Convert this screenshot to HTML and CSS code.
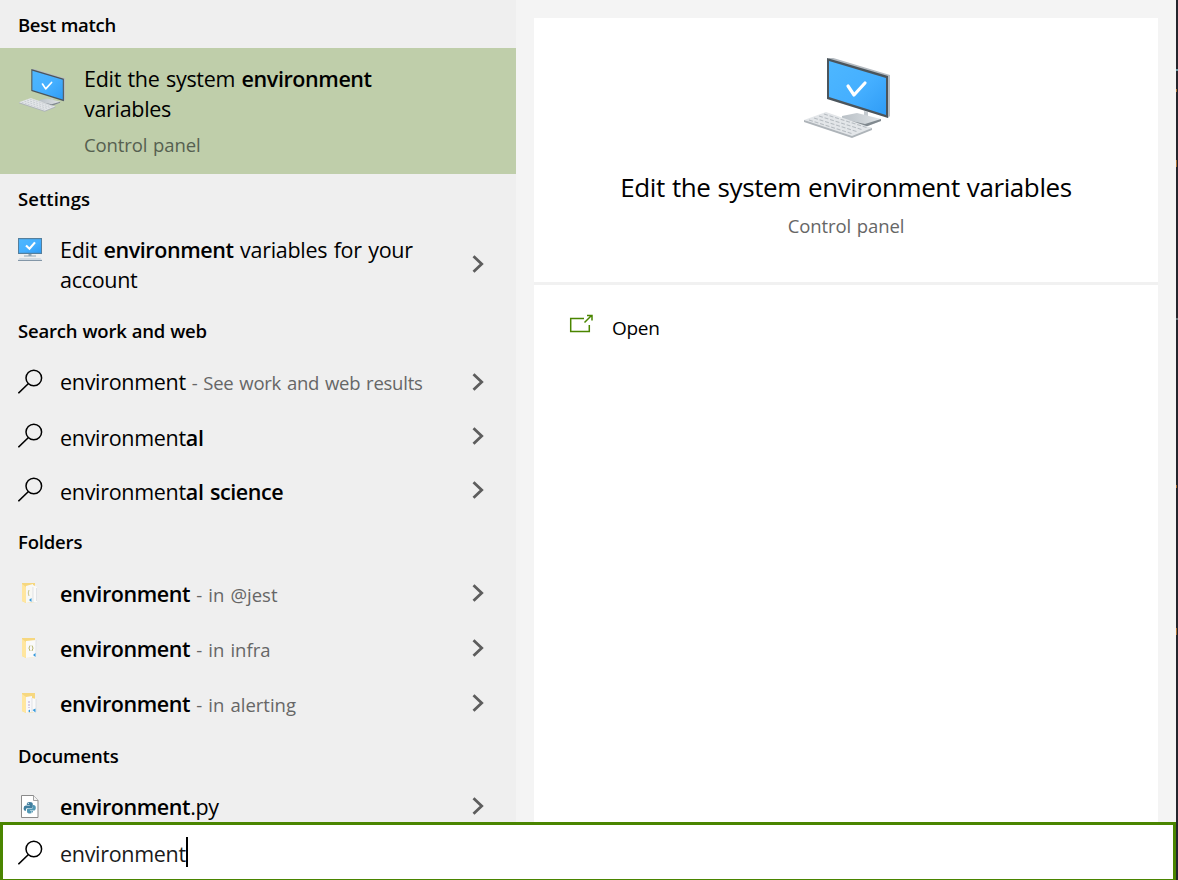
FILE: index.html
```html
<!DOCTYPE html>
<html lang="en">
<head>
<meta charset="utf-8">
<title>Search</title>
<link rel="stylesheet" href="styles.css">
</head>
<body>
<svg class="defs" aria-hidden="true">
  <defs>
    <linearGradient id="screen" x1="0" y1="0" x2="1" y2="1"><stop offset="0" stop-color="#4db7ff"/><stop offset=".55" stop-color="#45afff"/><stop offset="1" stop-color="#2f9cf6"/></linearGradient>
    <linearGradient id="stand" x1="0" y1="0" x2="1" y2="0"><stop offset="0" stop-color="#b9c0c6"/><stop offset="1" stop-color="#e0e4e7"/></linearGradient>
    <symbol id="computer" viewBox="0 0 88 82">
      <path d="M60 53l4 1v7h-4z" fill="#c5cbd0"/>
      <path d="M38 58l15-3 24 6v2l-16 6-23-8z" fill="url(#stand)"/>
      <path d="M38 61v2l23 6 16-6v-2l-16 5z" fill="#81898f"/>
      <path d="M24 0l2-1 60 18v41l-2 2z" fill="#b4bbc1"/>
      <path d="M23 0l61 18v42L23 41z" fill="#4b555c"/>
      <path d="M25 3l57 17v37L25 39z" fill="url(#screen)"/>
      <path d="M44 28l6 9 11-12" fill="none" stroke="#fff" stroke-width="3.200" stroke-linecap="round" stroke-linejoin="round"/>
      <path d="M0 62v2l48 16 20-8v-2z" fill="#aeb4b9"/>
      <path d="M0 62l22-8 46 16-20 8z" fill="#e3e6e9"/>
      <path d="M5 62l44 14M10 60l44 14M15 58l44 14M20 56l44 14" stroke="#b6bcc1" stroke-width="1.100" stroke-dasharray="4 1.800" fill="none"/>
    </symbol>
    <symbol id="monitor" viewBox="0 0 24 24">
      <path d="M0 0h24v16H0z" fill="#547f9d"/>
      <path d="M1 1.200h22v13.600H1z" fill="url(#screen)"/>
      <path d="M8 7.500l3.500 3.200L17 4.400" fill="none" stroke="#fff" stroke-width="2.200"/>
      <path d="M10.500 16h3v1.400H18v1H6v-1h4.500z" fill="#91a5b3"/>
      <path d="M1.500 20h21l1.500 2H0z" fill="#d2dae1"/><path d="M0 22h24v1H0z" fill="#8396a7"/>
    </symbol>
    <symbol id="search" viewBox="0 0 26 26">
      <circle cx="15.800" cy="9" r="7.800" fill="none" stroke="currentColor" stroke-width="1.500"/>
      <path d="M10.200 14.700L.4 24.300" stroke="currentColor" stroke-width="1.600"/>
    </symbol>
    <symbol id="chevron" viewBox="0 0 12 18"><path d="M1.500 1.200L9.700 9l-8.200 7.800" fill="none" stroke="#5d5d5d" stroke-width="2.800"/></symbol>
    <symbol id="folder-base" viewBox="0 0 18 22">
      <path d="M0 1h13v19l-9 1-4-2z" fill="#f6d77f"/>
      <path d="M0 2l4 3v16l-4-2z" fill="#ffe69f"/>
    </symbol>
    <symbol id="folder-a" viewBox="0 0 18 22">
      <use href="#folder-base" width="18" height="22"/>
      <path d="M4 4l7-2v18l-7 1z" fill="#f8f8f5"/><path d="M11 3l4 2v15h-4z" fill="#fafafa"/><path d="M11 5v15M14.500 6v13" stroke="#d5d9dc" stroke-width=".7"/>
      <path d="M7 8q-1.500 3 0 6" stroke="#c9c58e" fill="none"/><path d="M7 18l2.500-2v4z" fill="#3298dc"/>
    </symbol>
    <symbol id="folder-b" viewBox="0 0 18 22">
      <use href="#folder-base" width="18" height="22"/>
      <path d="M4 4l10-1 1 17-11 1z" fill="#fafafa"/><path d="M14 3v17" stroke="#d5d9dc" stroke-width=".7"/>
      <path d="M8 8.500q-2 2.500 0 5.500M10 8.500q2 2.500 0 5.500" stroke="#b8b46b" fill="none"/><path d="M11 18l2.500-2v4z" fill="#3298dc"/>
    </symbol>
    <symbol id="folder-c" viewBox="0 0 18 22">
      <use href="#folder-base" width="18" height="22"/>
      <path d="M4 5l6-1v16l-6 1z" fill="#f8f8fb"/><path d="M10 6l4 1v13h-4z" fill="#fafafa"/><path d="M10 6v14M14 7v13" stroke="#d5d9dc" stroke-width=".7"/>
      <path d="M7 9v7" stroke="#b7a2ce" stroke-dasharray="2 1"/><path d="M6 19l2-1.500v3zM10.500 18l3-1.500v4z" fill="#3298dc"/>
    </symbol>
    <symbol id="python" viewBox="0 0 18 23">
      <path d="M.5.5h12l4.500 5v17H.5z" fill="#fff" stroke="#8b8b8b"/><path d="M12.500.5v5H17" fill="#f2f2f2" stroke="#8b8b8b" stroke-width=".8"/>
      <path d="M5.800 9q0-2 3-2t3 2v3q0 1-1 1h-4q-2 0-2 2v1q-2.200 0-2.200-2.700T4.800 10.500h4V10h-3z" fill="#417f9f"/>
      <path d="M12 10q2.800-.2 2.800 2.700t-2.300 2.800H9v.6h3q0 2.400-3 2.400t-3-2v-2q0-1 1-1h3.500q1.500 0 1.500-1.500z" fill="#5298b5"/>
      <circle cx="7.300" cy="8.500" r=".6" fill="#fff"/><circle cx="10.500" cy="17" r=".6" fill="#fff"/>
    </symbol>
  </defs>
</svg>
<div class="window">
  <div class="panes">
    <main class="results">
      <h2 class="heading heading-best">Best match</h2>
      <div class="best">
        <svg class="best-icon"><use href="#computer"/></svg>
        <div class="best-copy">
          <div class="title">Edit the system <b>environment</b><br>variables</div>
          <div class="sub">Control panel</div>
        </div>
      </div>
      <h2 class="heading heading-settings">Settings</h2>
      <div class="row row-tall"><svg class="monitor-icon"><use href="#monitor"/></svg><div class="title">Edit <b>environment</b> variables for your<br>account</div><svg class="chevron"><use href="#chevron"/></svg></div>
      <h2 class="heading heading-web">Search work and web</h2>
      <div class="row row-first"><svg class="search-icon"><use href="#search"/></svg><div class="title">environment<span class="hint"> - See work and web results</span></div><svg class="chevron"><use href="#chevron"/></svg></div>
      <div class="row row-suggestion"><svg class="search-icon"><use href="#search"/></svg><div class="title">environment<b>al</b></div><svg class="chevron"><use href="#chevron"/></svg></div>
      <div class="row row-suggestion"><svg class="search-icon"><use href="#search"/></svg><div class="title">environment<b>al science</b></div><svg class="chevron"><use href="#chevron"/></svg></div>
      <h2 class="heading heading-folders">Folders</h2>
      <div class="row row-file"><svg class="folder-icon"><use href="#folder-a"/></svg><div class="title"><b>environment</b><span class="hint"> - in @jest</span></div><svg class="chevron"><use href="#chevron"/></svg></div>
      <div class="row row-file"><svg class="folder-icon"><use href="#folder-b"/></svg><div class="title"><b>environment</b><span class="hint"> - in infra</span></div><svg class="chevron"><use href="#chevron"/></svg></div>
      <div class="row row-file"><svg class="folder-icon"><use href="#folder-c"/></svg><div class="title"><b>environment</b><span class="hint"> - in alerting</span></div><svg class="chevron"><use href="#chevron"/></svg></div>
      <h2 class="heading heading-docs">Documents</h2>
      <div class="row"><svg class="python-icon"><use href="#python"/></svg><div class="title"><b>environment</b>.py</div><svg class="chevron"><use href="#chevron"/></svg></div>
    </main>
    <aside class="preview">
      <section class="card">
        <svg class="card-icon"><use href="#computer"/></svg>
        <h1 class="card-title">Edit the system environment variables</h1>
        <div class="sub">Control panel</div>
      </section>
      <section class="actions">
        <div class="action">
          <svg class="open-icon" viewBox="0 0 26 20"><path d="M15 4.500H1.700v13h18.600V11M15.500 8.500L22.500 1.500M18 1.500h5v5" fill="none" stroke="#4a8500" stroke-width="1.500"/></svg>
          <span class="action-label">Open</span>
        </div>
      </section>
    </aside>
  </div>
  <div class="searchbar"><svg class="search-icon"><use href="#search"/></svg><span class="query">environment</span><i class="caret"></i></div>
</div>
<svg class="desktop" viewBox="0 0 2 880"><path d="M0 0h2v880H0z" fill="#25252d"/><path d="M0 69h2v2H0z" fill="#6f9ba5"/><path d="M0 89h1v3H0zM0 160h1v7H0zM0 485h1v3H0zM0 628h1v7H0z" fill="#a66b31"/><path d="M0 318h2v2H0z" fill="#66747b"/></svg>
</body>
</html>
```

FILE: styles.css
```css
* { box-sizing: border-box; }
body { margin: 0; width: 1178px; height: 880px; display: flex; overflow: hidden; background: #efefef; color: #000; font-family: "Open Sans", "Noto Sans", sans-serif; }
.defs { position: absolute; width: 0; height: 0; }
svg { display: block; flex: none; }
h1, h2 { margin: 0; }
.window { width: 1176px; height: 880px; display: flex; flex-direction: column; }
.panes { height: 822px; display: flex; overflow: hidden; }
.results { width: 516px; background: #efefef; }
.heading { height: 49px; padding: 0 0 2px 18px; display: flex; align-items: center; font-size: 18.500px; font-weight: 600; letter-spacing: -.18px; word-spacing: .4px; }
.heading-best { height: 48px; padding-bottom: 0; letter-spacing: -.32px; }
.heading-settings, .heading-web { height: 50px; }
.heading-settings { letter-spacing: .05px; }
.heading-docs { height: 48px; }
.title { font-size: 21.500px; line-height: 30px; letter-spacing: -.3px; word-spacing: 1.200px; white-space: pre; }
.title b { font-weight: 600; letter-spacing: -.41px; }
.sub { color: #666; font-size: 18.500px; line-height: 26px; letter-spacing: -.1px; word-spacing: 1px; }
.hint { color: #666; font-size: 18.500px; letter-spacing: -.25px; word-spacing: 1.300px; }
.row-file .hint { letter-spacing: 0; }
.best { height: 126px; display: flex; padding: 16px 0 0 19px; background: #bfceaa; }
.best-icon { width: 47px; height: 44px; margin: 5px 18px 0 0; }
.best .sub { margin-top: 8px; color: #566050; }
.row { height: 54px; display: flex; align-items: center; padding: 0 32px 0 18px; }
.row-file { height: 55px; }
.row-tall { height: 82px; }
.row .title { flex: 1; }
.row-first .title { padding-bottom: 2px; }
.row-suggestion .title { padding-top: 2px; }
.monitor-icon { width: 24px; height: 24px; margin: -30px 18px 0 0; }
.search-icon { width: 26px; height: 26px; margin-right: 16px; }
.row .search-icon { margin-bottom: 2px; }
.folder-icon { width: 18px; height: 22px; margin: -4px 20px 0 4px; }
.python-icon { width: 18px; height: 23px; margin: -2px 21px 0 3px; }
.chevron { width: 12px; height: 18px; margin-bottom: 2px; }
.row-file .chevron { margin-bottom: 3px; }
.preview { width: 660px; padding: 18px 18px 0; background: #f4f4f4; }
.card { height: 267px; border-bottom: 3px solid #f1f1f1; background: #fff; display: flex; flex-direction: column; align-items: center; padding-top: 40px; }
.card-icon { width: 88px; height: 82px; margin-left: 4px; }
.card-title { margin-top: 28px; font-size: 26px; font-weight: 400; line-height: 38px; letter-spacing: -.4px; word-spacing: .7px; }
.card .sub { margin-top: 7px; }
.actions { height: 537px; padding: 28px 0 0 35px; background: #fff; }
.action { display: flex; align-items: center; height: 30px; }
.open-icon { width: 26px; height: 20px; margin: -8px 17px 0 0; }
.action-label { font-size: 19px; letter-spacing: -.3px; }
.searchbar { height: 58px; border: 3px solid #4a8500; border-bottom-width: 1px; background: #fff; display: flex; align-items: center; padding-left: 15px; }
.searchbar .search-icon { margin-top: 1px; }
.query { padding-top: 2px; font-size: 21.500px; letter-spacing: -.3px; color: #1a1a1a; }
.caret { width: 2px; height: 30px; background: #000; }
.desktop { width: 2px; height: 880px; }
```
